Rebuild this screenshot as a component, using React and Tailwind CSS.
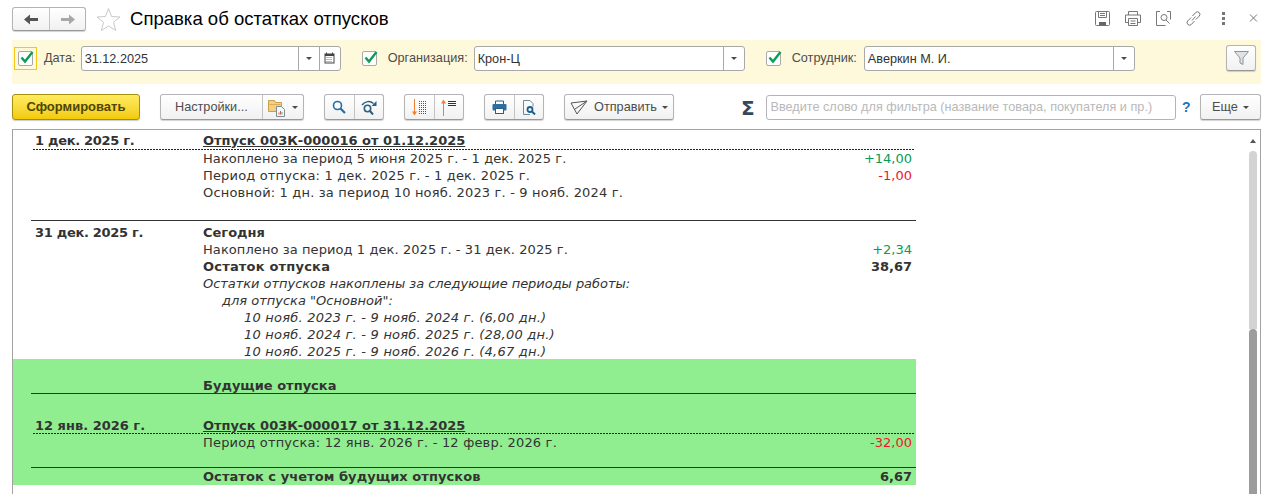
const BTN = 'flex items-center justify-center bg-linear-to-b from-white to-[#f1f1f1] border border-[#b4b4b4] border-b-[#989898] rounded-[3px] shadow-[0_1px_1px_rgba(0,0,0,0.18)] text-[#4d4d4d]'
const DOTS = 'h-px ml-[2px] mr-px bg-[repeating-linear-gradient(90deg,#222_0_2px,transparent_2px_3px)]'

function Caret({ className = '' }) {
  return <span className={`w-0 h-0 border-x-[3px] border-x-transparent border-t-[3px] border-t-[#4a4a4a] ${className}`} />
}

function Check() {
  return (
    <span className="relative block w-[15px] h-[15px] bg-white border border-[#a9a9a9] rounded-[2px]">
      <svg className="absolute left-0 -top-[3px]" width="16" height="16" viewBox="0 0 16 16">
        <path d="M2.5 8.5 L6 12.5 L13.5 3" fill="none" stroke="#0d9d58" strokeWidth="2.4" />
      </svg>
    </span>
  )
}

function Field({ width, value, calendar }) {
  return (
    <div className={`flex h-[25px] bg-white border border-[#a8a8a8] rounded-[3px] text-[#333] ${width}`}>
      <div className="flex-1 pl-[3px] leading-[24px]">{value}</div>
      <div className="w-[21px] border-l border-[#a8a8a8] flex items-center justify-center"><Caret /></div>
      {calendar && (
        <div className="w-[21px] border-l border-[#a8a8a8] flex items-center justify-center">
          <svg width="11" height="12" viewBox="0 0 11 12">
            <path d="M2.5 0.5v2M8.5 0.5v2" stroke="#444" />
            <rect x="1" y="2" width="9" height="9" fill="none" stroke="#444" />
            <rect x="1" y="2" width="9" height="2" fill="#444" />
            <path d="M2.5 5.5h6M2.5 7.5h6M2.5 9.5h6" stroke="#777" strokeDasharray="1 1" />
          </svg>
        </div>
      )}
    </div>
  )
}

function Row({ date, text, value, dateClass = '', valueClass = '', height = 'h-[17px]', className = '' }) {
  return (
    <div className={`flex items-center pl-[4px] pr-[4px] whitespace-nowrap ${height} ${className}`}>
      <div className={`w-[168px] font-bold ${dateClass}`}>{date}</div>
      <div className="flex-1">{text}</div>
      <div className={valueClass}>{value}</div>
    </div>
  )
}

function Note({ text, indent = 'pl-[172px]', className = '', height = 'h-[17px] leading-[17px]' }) {
  return <div className={`italic whitespace-nowrap ${height} ${indent} ${className}`}>{text}</div>
}

export default function App() {
  return (
    <div className="w-[1274px] h-[494px] overflow-hidden bg-white flex flex-col pl-[12px] pr-[13px] text-[12.7px] font-['Liberation_Sans',Arial,sans-serif]">
      {/* заголовок */}
      <div className="h-[40px] flex items-start pt-[7px]">
        <div className={`${BTN} w-[74px] h-[24px]`}>
          <div className="w-[37px] h-full flex items-center justify-center border-r border-[#c4c4c4]">
            <svg width="15" height="11" viewBox="0 0 15 11"><path d="M0 5.5 L6 0.5 V4 H14 V7 H6 V10.5 Z" fill="#555" /></svg>
          </div>
          <div className="flex-1 h-full flex items-center justify-center">
            <svg width="15" height="11" viewBox="0 0 15 11"><path d="M15 5.5 L9 0.5 V4 H1 V7 H9 V10.5 Z" fill="#a8a8a8" /></svg>
          </div>
        </div>
        <svg className="ml-[10px]" width="25" height="25" viewBox="0 0 25 25">
          <path d="M12.5 1.5 L15.6 9.5 L24 10 L17.5 15.3 L19.7 23.5 L12.5 19 L5.3 23.5 L7.5 15.3 L1 10 L9.4 9.5 Z" fill="none" stroke="#c9c9c9" />
        </svg>
        <div className="ml-[9px] -mt-[1px] text-[18.55px] leading-[26px] text-black">Справка об остатках отпусков</div>
        <div className="ml-auto flex items-center gap-[15px] mt-[4px]">
          <svg width="15" height="15" viewBox="0 0 15 15" fill="none" stroke="#777">
            <path d="M1.5 0.5h12a1 1 0 0 1 1 1v12a1 1 0 0 1-1 1h-12a1 1 0 0 1-1-1v-12a1 1 0 0 1 1-1z" /><path d="M3.5 0.5v6h8v-6M5 2.5h5M5 4.5h5" /><rect x="4" y="11" width="7" height="3.5" fill="#666" stroke="none" />
          </svg>
          <svg width="16" height="15" viewBox="0 0 16 15" fill="none" stroke="#777">
            <path d="M3.5 4V0.5h9V4" /><path d="M3 11.5H0.5V4h15v7.5H13" /><path d="M3.5 7.5h9v7h-9zM5.5 10h5M5.5 12.5h5" />
          </svg>
          <svg width="15" height="15" viewBox="0 0 15 15" fill="none" stroke="#777">
            <path d="M4 0.5H0.5v14h9M11 0.5h3.5v8" /><circle cx="8" cy="6.5" r="3" /><path d="M10 9l3.5 3.5" />
          </svg>
          <svg width="15" height="15" viewBox="0 0 15 15" fill="none" stroke="#777">
            <path d="M6 9.5L9.5 5.5M6.5 5L9.5 1.7a2.4 2.4 0 0 1 3.8 3.3L9.8 8.5M8.5 10L5.5 13.3a2.4 2.4 0 0 1-3.8-3.3L5.2 6.5" />
          </svg>
          <div className="w-[15px] flex flex-col items-center gap-[2px]">
            <span className="w-[3px] h-[3px] bg-[#777]" /><span className="w-[3px] h-[3px] bg-[#777]" /><span className="w-[3px] h-[3px] bg-[#777]" />
          </div>
          <svg width="15" height="9" viewBox="0 0 15 9" fill="none" stroke="#777"><path d="M4 0.5l7 7M11 0.5l-7 7" /></svg>
        </div>
      </div>

      {/* отбор */}
      <div className="h-[44px] bg-[#fef9da] flex items-center text-[#4d4d4d] pr-[5px] pb-[8px]">
        <div className="ml-[2px] w-[23px] h-[23px] border border-[#f5c518] flex items-center justify-center"><Check /></div>
        <span className="ml-[7px] mr-[5px] pt-px">Дата:</span>
        <Field width="w-[260px]" value="31.12.2025" calendar />
        <span className="ml-[21px]"><Check /></span>
        <span className="ml-[11px] mr-[6px] pt-px">Организация:</span>
        <Field width="w-[271px]" value="Крон-Ц" />
        <span className="ml-[21px]"><Check /></span>
        <span className="ml-[11px] mr-[7px] pt-px">Сотрудник:</span>
        <Field width="w-[271px]" value="Аверкин М. И." />
        <div className={`${BTN} ml-auto w-[30px] h-[26px]`}>
          <svg width="15" height="14" viewBox="0 0 15 14"><path d="M0.5 0.5h14L9 7v6.5l-3-1.5V7z" fill="#dfe3e6" stroke="#8d9499" /></svg>
        </div>
      </div>

      {/* кнопки */}
      <div className="h-[45px] flex items-center pt-[1px]">
        <div className="w-[128px] h-[26px] flex items-center justify-center bg-linear-to-b from-[#ffeb5c] to-[#f2cb00] border border-[#a8900f] rounded-[3px] shadow-[0_1px_1px_rgba(0,0,0,0.2)] text-[13px] font-bold text-[#4d4700]">Сформировать</div>
        <div className={`${BTN} ml-[20px] w-[144px] h-[26px]`}>
          <div className="w-[102px] h-full pt-px flex items-center justify-center border-r border-[#c4c4c4]">Настройки...</div>
          <div className="flex-1 h-full flex items-center justify-center gap-[5px]">
            <svg width="19" height="19" viewBox="0 0 19 19">
              <path d="M0.5 13.5V2.5h6l1 2h6v9z" fill="#f3cf85" stroke="#c8a04a" />
              <path d="M1.5 6.5h11" stroke="#dcae55" />
              <path d="M8.5 8.5h5l3 3v7h-8z" fill="#f4f7f9" stroke="#7d8b94" />
              <path d="M11 16.5v-2M12.5 16.5v-3.5" stroke="#d9534f" /><path d="M14 16.5v-2.5" stroke="#4caf50" />
            </svg>
            <Caret />
          </div>
        </div>
        <div className={`${BTN} ml-[20px] w-[60px] h-[26px]`}>
          <div className="w-[30px] h-full flex items-center justify-center border-r border-[#c4c4c4]">
            <svg width="14" height="14" viewBox="0 0 14 14" fill="none" stroke="#1f6fa8"><circle cx="5.5" cy="5.5" r="4" strokeWidth="1.6" /><path d="M8.5 8.5l4.5 4.5" strokeWidth="2.2" /></svg>
          </div>
          <div className="flex-1 h-full flex items-center justify-center">
            <svg width="16" height="15" viewBox="0 0 16 15" fill="none" stroke="#2c5f80">
              <circle cx="6.5" cy="8.5" r="3.2" strokeWidth="1.6" /><path d="M9 11l3 3.5" strokeWidth="2" /><path d="M1 5C4 1 9 0.5 12.5 3.5" strokeWidth="1.5" /><path d="M15.5 1v5h-5z" fill="#2c5f80" stroke="none" />
            </svg>
          </div>
        </div>
        <div className={`${BTN} ml-[20px] w-[60px] h-[26px]`}>
          <div className="w-[30px] h-full flex items-center justify-center border-r border-[#c4c4c4]">
            <svg width="17" height="17" viewBox="0 0 17 17" fill="none">
              <path d="M3.5 0v14" stroke="#f08030" /><path d="M1 12.5l2.5 4 2.5-4z" fill="#f08030" />
              <path d="M8 2.5h8M8 4.5h8M8 6.5h8M8 8.5h8M8 10.5h8M8 12.5h8M8 14.5h8" stroke="#555" strokeDasharray="1 1" />
            </svg>
          </div>
          <div className="flex-1 h-full flex items-center justify-center">
            <svg width="17" height="17" viewBox="0 0 17 17" fill="none">
              <path d="M3.5 17V3" stroke="#f08030" /><path d="M1 4.5l2.5-4 2.5 4z" fill="#f08030" />
              <path d="M8 2.5h8M8 4.5h8M8 6.5h8" stroke="#333" />
            </svg>
          </div>
        </div>
        <div className={`${BTN} ml-[20px] w-[60px] h-[26px]`}>
          <div className="w-[30px] h-full flex items-center justify-center border-r border-[#c4c4c4]">
            <svg width="15" height="14" viewBox="0 0 15 14">
              <path d="M3.5 4V1h8v3" fill="none" stroke="#2c5f80" /><rect x="0.5" y="4" width="14" height="6.5" rx="1" fill="#2c6f9f" /><rect x="3.5" y="8.5" width="8" height="5" fill="#fff" stroke="#2c5f80" />
            </svg>
          </div>
          <div className="flex-1 h-full flex items-center justify-center">
            <svg width="14" height="15" viewBox="0 0 14 15" fill="none">
              <path d="M8 14.5H1.5V0.5H8l3 3v3" stroke="#6d8aa0" /><circle cx="8" cy="9.5" r="2.5" stroke="#1a5f8f" strokeWidth="1.8" /><path d="M10 11.5l3 3" stroke="#1a5f8f" strokeWidth="2" />
            </svg>
          </div>
        </div>
        <div className={`${BTN} ml-[20px] w-[111px] h-[26px] gap-[5px]`}>
          <svg width="18" height="15" viewBox="0 0 18 15" fill="none" stroke="#555"><path d="M1 3L17 1L7 14zM5 9L17 1" /></svg>
          <span className="ml-[1px] pt-px">Отправить</span>
          <Caret />
        </div>
        <span className="ml-[65px] mt-[2px] w-[17px] text-center text-[20px] leading-none font-bold text-[#34495e] font-['DejaVu_Sans',sans-serif]">Σ</span>
        <div className="ml-[10px] w-[410px] h-[25px] bg-white border border-[#b4b4b4] rounded-[3px] pl-[3px] leading-[23px] text-[#b9b9b9]">Введите слово для фильтра (название товара, покупателя и пр.)</div>
        <span className="ml-[6px] w-[8px] text-[14px] font-bold text-[#2272b9]">?</span>
        <div className={`${BTN} ml-[10px] w-[61px] h-[26px] gap-[5px]`}>
          <span className="pt-px">Еще</span>
          <Caret />
        </div>
      </div>

      {/* отчет */}
      <div className="flex-1 flex border-t border-x border-[#a3a3a3] min-h-0 font-['DejaVu_Sans',Verdana,sans-serif] text-[13px] text-[#333]">
        <div className="w-[903px]">
          <div className="pl-[18px]">
            <Row date="1 дек. 2025 г." dateClass="tracking-[-0.3px]" height="h-[19px]" className="pt-[3px]" text={<span className="font-bold underline">Отпуск 003К-000016 от 01.12.2025</span>} />
            <div className={DOTS} />
            <Row text={<span className="tracking-[0.08px]">Накоплено за период 5 июня 2025 г. - 1 дек. 2025 г.</span>} value="+14,00" valueClass="text-[#0a9a5a]" />
            <Row text={<span className="tracking-[0.17px]">Период отпуска: 1 дек. 2025 г. - 1 дек. 2025 г.</span>} value="-1,00" valueClass="text-[#f0142d]" />
            <Row text={<span className="tracking-[0.17px]">Основной: 1 дн. за период 10 нояб. 2023 г. - 9 нояб. 2024 г.</span>} />
            <div className="h-[20px] border-b border-[#333]" />
            <div className="h-[3px]" />
            <Row date="31 дек. 2025 г." dateClass="tracking-[-0.3px]" text={<b>Сегодня</b>} />
            <Row text={<span className="tracking-[0.08px]">Накоплено за период 1 дек. 2025 г. - 31 дек. 2025 г.</span>} value="+2,34" valueClass="text-[#0a9a5a]" />
            <Row text={<b className="tracking-[0.2px]">Остаток отпуска</b>} value="38,67" valueClass="font-bold" />
            <Note className="tracking-[-0.04px]" text="Остатки отпусков накоплены за следующие периоды работы:" />
            <Note indent="pl-[191px]" text='для отпуска "Основной":' />
            <Note indent="pl-[213px]" className="tracking-[0.22px]" text="10 нояб. 2023 г. - 9 нояб. 2024 г. (6,00 дн.)" />
            <Note indent="pl-[213px]" className="tracking-[0.22px]" text="10 нояб. 2024 г. - 9 нояб. 2025 г. (28,00 дн.)" />
            <Note indent="pl-[213px]" className="tracking-[0.22px]" height="h-[16px] leading-[18px]" text="10 нояб. 2025 г. - 9 нояб. 2026 г. (4,67 дн.)" />
          </div>
          <div className="bg-[#90ee90] pl-[18px] h-[126px]">
            <div className="h-[18px]" />
            <Row height="h-[16px]" className="pt-[2px]" text={<b>Будущие отпуска</b>} />
            <div className="h-px bg-[#333]" />
            <div className="h-[23px]" />
            <Row date="12 янв. 2026 г." height="h-[16px]" className="pt-[2px]" text={<span className="font-bold underline">Отпуск 003К-000017 от 31.12.2025</span>} />
            <div className={DOTS} />
            <Row text={<span className="tracking-[0.18px]">Период отпуска: 12 янв. 2026 г. - 12 февр. 2026 г.</span>} value="-32,00" valueClass="text-[#f0142d]" />
            <div className="h-[17px] border-b border-[#333]" />
            <Row text={<b className="tracking-[0.06px]">Остаток с учетом будущих отпусков</b>} value="6,67" valueClass="font-bold" />
          </div>
        </div>
        <div className="ml-auto mr-[3px] w-[8px] flex flex-col items-center">
          <span className="mt-[9px] mb-[8px] w-0 h-0 border-x-[3px] border-x-transparent border-b-[4px] border-b-[#555]" />
          <div className="h-[178px] bg-[#d3d3d3] rounded-t-[4px] w-full" />
          <div className="flex-1 bg-[#9c9c9c] rounded-t-[4px] w-full" />
        </div>
      </div>
    </div>
  )
}
